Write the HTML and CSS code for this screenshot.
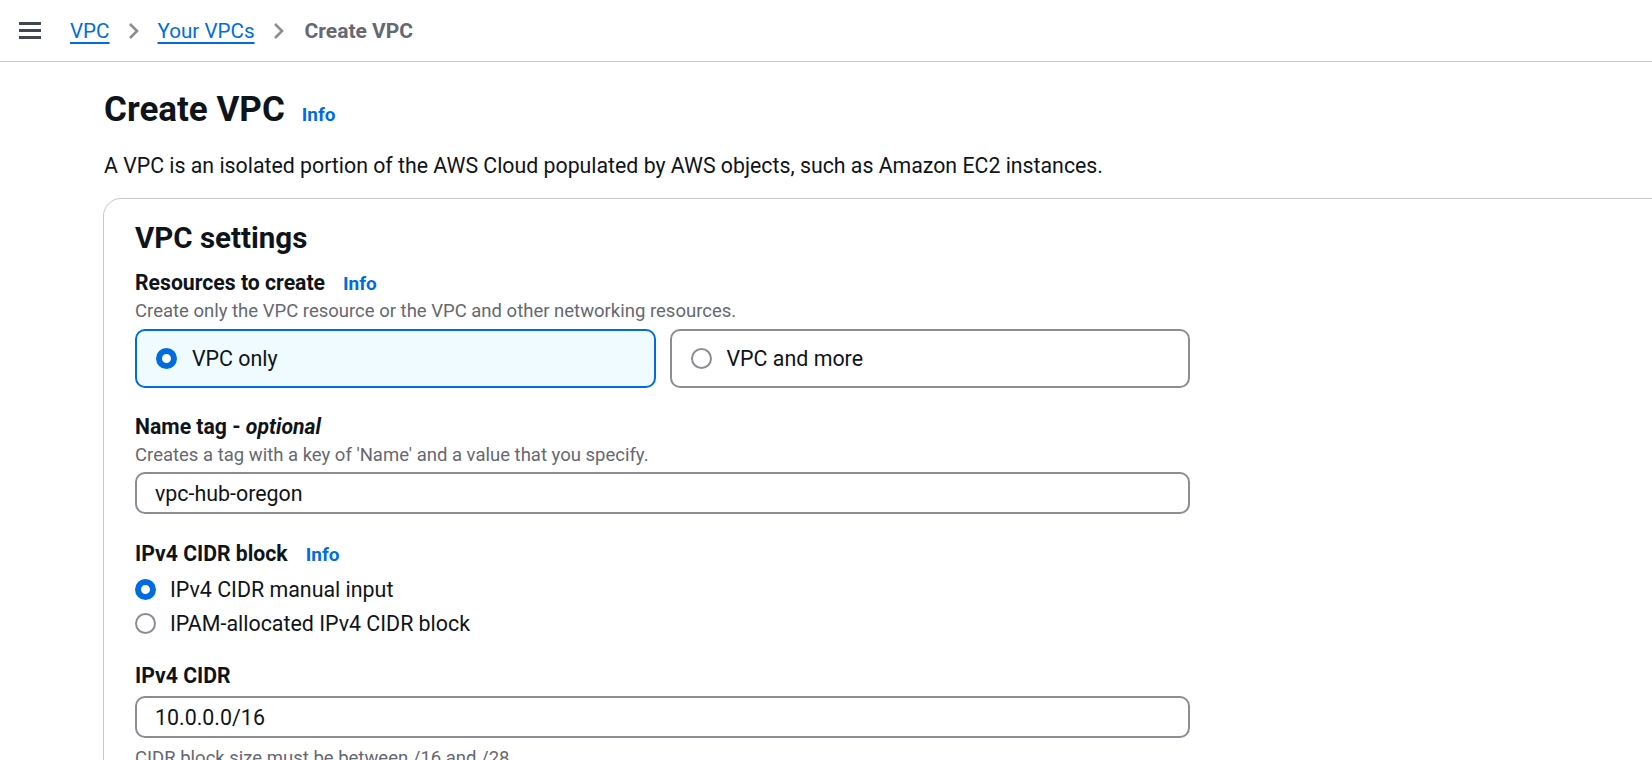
FILE: index.html
```html
<!DOCTYPE html>
<html lang="en">
<head>
<meta charset="utf-8">
<title>Create VPC</title>
<link rel="stylesheet" href="styles.css">
</head>
<body>
<header class="topbar">
  <button class="menu-btn" aria-label="Open navigation">
    <svg width="22" height="17" viewBox="0 0 22 17"><rect x="0" y="0" width="22" height="3" fill="#424650"/><rect x="0" y="7" width="22" height="3" fill="#424650"/><rect x="0" y="14" width="22" height="3" fill="#424650"/></svg>
  </button>
  <nav class="crumbs">
    <a class="crumb-link" href="#">VPC</a>
    <svg class="chev" width="12" height="18" viewBox="0 0 12 18"><path d="M2 2 L9 9 L2 16" fill="none" stroke="#8c8c94" stroke-width="2.6"/></svg>
    <a class="crumb-link" href="#">Your VPCs</a>
    <svg class="chev" width="12" height="18" viewBox="0 0 12 18"><path d="M2 2 L9 9 L2 16" fill="none" stroke="#8c8c94" stroke-width="2.6"/></svg>
    <span class="crumb-current">Create VPC</span>
  </nav>
</header>
<main class="page">
  <div class="page-head">
    <h1 class="title">Create VPC</h1>
    <a class="info" href="#">Info</a>
  </div>
  <p class="page-desc">A VPC is an isolated portion of the AWS Cloud populated by AWS objects, such as Amazon EC2 instances.</p>
  <section class="card">
    <h2 class="card-title">VPC settings</h2>
    <div class="field">
      <div class="label-row"><span class="label">Resources to create</span><a class="info" href="#">Info</a></div>
      <div class="field-desc">Create only the VPC resource or the VPC and other networking resources.</div>
      <div class="tiles">
        <div class="tile selected"><span class="radio on"></span><span>VPC only</span></div>
        <div class="tile"><span class="radio"></span><span>VPC and more</span></div>
      </div>
    </div>
    <div class="field field-name">
      <div class="label-row"><span class="label">Name tag - <em>optional</em></span></div>
      <div class="field-desc">Creates a tag with a key of 'Name' and a value that you specify.</div>
      <div class="input">vpc-hub-oregon</div>
    </div>
    <div class="field field-block">
      <div class="label-row"><span class="label">IPv4 CIDR block</span><a class="info" href="#">Info</a></div>
      <div class="radio-group">
        <div class="radio-item"><span class="radio on"></span><span>IPv4 CIDR manual input</span></div>
        <div class="radio-item"><span class="radio"></span><span>IPAM-allocated IPv4 CIDR block</span></div>
      </div>
    </div>
    <div class="field field-cidr">
      <div class="label-row"><span class="label">IPv4 CIDR</span></div>
      <div class="input gap-top">10.0.0.0/16</div>
      <div class="field-desc hint">CIDR block size must be between /16 and /28.</div>
    </div>
  </section>
</main>
</body>
</html>
```
FILE: styles.css
```css
* { box-sizing: border-box; }
html, body { margin: 0; padding: 0; }
body {
  width: 1652px;
  height: 760px;
  overflow: hidden;
  background: #ffffff;
  color: #0f141a;
  font-family: Roboto, "Noto Sans", Arial, sans-serif;
}
.topbar {
  height: 62px;
  border-bottom: 1px solid #c6c6cd;
  display: flex;
  align-items: center;
  padding-left: 19px;
}
.menu-btn {
  border: 0;
  background: none;
  padding: 0;
  margin: 0 29px 0 0;
  display: flex;
}
.crumbs {
  display: flex;
  align-items: center;
  gap: 18px;
  font-size: 20.6px;
  line-height: 28px;
}
.crumb-link {
  color: #006ce0;
  text-decoration: underline;
  text-decoration-thickness: 2px;
  text-underline-offset: 4px;
}
.crumb-current {
  color: #656871;
  font-weight: 700;
  font-size: 21px;
  margin-left: 2px;
}
.chev { display: block; }
.page {
  padding-left: 104px;
}
.page-head {
  display: flex;
  align-items: baseline;
  gap: 17px;
  margin-top: 26px;
}
.title {
  margin: 0;
  font-size: 35px;
  line-height: 44px;
  font-weight: 700;
}
.info {
  color: #006ce0;
  font-weight: 700;
  font-size: 19px;
  text-decoration: none;
}
.page-desc {
  margin: 20px 0 0;
  font-size: 21.3px;
  line-height: 28px;
}
.card {
  margin-top: 18px;
  margin-left: -1px;
  width: 1700px;
  border: 1px solid #c6c6cd;
  border-radius: 18px;
  padding: 19px 31px 40px;
}
.card-title {
  margin: 0 0 11px;
  font-size: 29.5px;
  line-height: 40px;
  font-weight: 700;
}
.field { width: 1055px; }
.field-name { margin-top: 25px; }
.field-block { margin-top: 26px; }
.field-cidr { margin-top: 22px; }
.label-row {
  display: flex;
  align-items: baseline;
  gap: 18px;
}
.field-name .label-row,
.field-block .label-row,
.field-cidr .label-row { margin-top: 6px; }
.label {
  font-size: 21.2px;
  line-height: 28px;
  font-weight: 700;
}
.label em { font-style: italic; }
.field-desc {
  margin-top: 2px;
  font-size: 18.5px;
  line-height: 24px;
  color: #656871;
}
.tiles {
  display: grid;
  grid-template-columns: 1fr 1fr;
  gap: 14px;
  margin-top: 6px;
}
.tile {
  height: 59px;
  border: 2px solid #8c8c94;
  border-radius: 10px;
  display: flex;
  align-items: center;
  gap: 15px;
  padding-left: 19px;
  font-size: 21.4px;
}
.tile.selected {
  border-color: #006ce0;
  background: #f0fbff;
}
.radio {
  width: 21px;
  height: 21px;
  border-radius: 50%;
  border: 2px solid #8c8c94;
  flex: none;
  background: #fff;
}
.radio.on {
  border: 6.5px solid #006ce0;
}
.input {
  margin-top: 5px;
  height: 42px;
  border: 2px solid #8c8c94;
  border-radius: 10px;
  display: flex;
  align-items: center;
  padding-left: 18px;
  font-size: 21.4px;
}
.input.gap-top { margin-top: 6px; }
.radio-group { margin-top: 4px; }
.radio-item {
  display: flex;
  align-items: center;
  gap: 14px;
  height: 34px;
  font-size: 21.4px;
}
.hint { margin-top: 8px; }
```
